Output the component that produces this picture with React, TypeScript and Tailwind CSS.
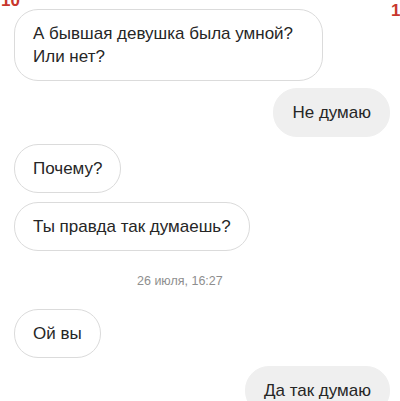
import React from "react";

type Msg = { text: string; mine?: boolean; mt: string };

const font = { fontFamily: '"Liberation Sans", Arial, sans-serif' };

function Bubble({ text, mine, mt }: Msg) {
  return (
    <div
      className={`${mt} max-w-[309px] rounded-[24px] px-[18px] py-3 text-[17px] leading-[23px] text-[#262626] ${
        mine ? "self-end mr-[10px] bg-[#efefef] border border-[#efefef]" : "self-start ml-[14px] bg-white border border-[#dbdbdb]"
      }`}
    >
      {text}
    </div>
  );
}

export default function App() {
  return (
    <div className="relative w-[400px] h-[401px] overflow-hidden bg-white" style={font}>
      {/* cut-off red marks at the top corners */}
      <span className="absolute left-[1px] top-[-8px] text-[17px] font-bold leading-[17px] text-[#c8372d]">10</span>
      <span className="absolute left-[391px] top-[2px] text-[17px] font-bold leading-[17px] text-[#c8372d]">1</span>

      <div className="flex flex-col pt-[9px]">
        <Bubble mt="mt-0" text="А бывшая девушка была умной? Или нет?" />
        <Bubble mt="mt-[7px]" mine text="Не думаю" />
        <Bubble mt="mt-[7px]" text="Почему?" />
        <Bubble mt="mt-[9px]" text="Ты правда так думаешь?" />

        <div className="mt-[22px] ml-[137px] self-start text-[12.5px] leading-[16px] text-[#8e8e8e]">
          26 июля, 16:27
        </div>

        <Bubble mt="mt-[20px]" text="Ой вы" />
        <Bubble mt="mt-[8px]" mine text="Да так думаю" />
      </div>
    </div>
  );
}
